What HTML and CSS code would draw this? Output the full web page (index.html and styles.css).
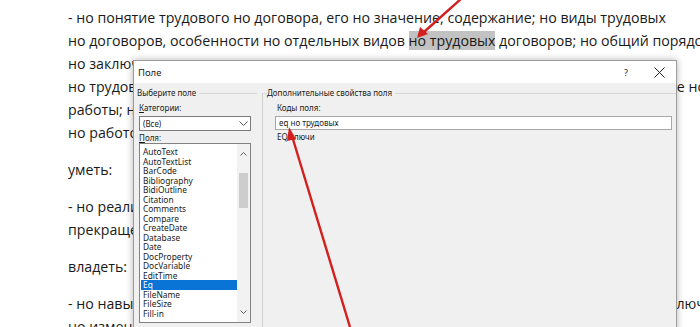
FILE: index.html
```html
<!DOCTYPE html>
<html>
<head lang="ru">
    <meta charset="UTF-8">
    <title>Поле</title>
    <link rel="stylesheet" href="styles.css">
</head>
<body>
    <div class="page">
        <p>- но понятие трудового но договора, его но значение, содержание; но виды трудовых<br>
        но договоров, особенности но отдельных видов <span class="hl">но трудовых</span> договоров; но общий порядок<br>
        но заключения, изменения и прекращения трудового договора; но правовые<br>
        но трудового распорядка; но дисциплина труда и ответственность работниц; основание но<br>
        работы; но гарантии при заключении трудового договора с работником<br>
        но работодателя и порядок оформления документов</p>
        <p>уметь:</p>
        <p>- но реализовывать нормы трудового права в профессиональной<br>
        прекращения трудовых отношений</p>
        <p>владеть:</p>
        <p>- но навыками работы с нормативными документами, но порядком оформления но заключения<br>
        но изменения трудового договора</p>
    </div>

    <div class="dialog">
        <div class="titlebar">
            <span class="title">Поле</span>
            <span class="help">?</span>
            <span class="close">
                <svg width="11" height="11" viewBox="0 0 11 11"><path d="M0.5 0.5L10.5 10.5M10.5 0.5L0.5 10.5" stroke="#222" stroke-width="1"/></svg>
            </span>
        </div>
        <div class="dlg-body">
            <fieldset class="group group-left">
                <legend>Выберите поле</legend>
                <div class="label"><u>К</u>атегории:</div>
                <div class="select">
                    <span>(Все)</span>
                    <span class="drop">
                        <svg width="9" height="5" viewBox="0 0 9 5"><path d="M0.5 0.5L4.5 4.5L8.5 0.5" fill="none" stroke="#555" stroke-width="1"/></svg>
                    </span>
                </div>
                <div class="label"><u>П</u>оля:</div>
                <div class="listbox">
                    <ul>
                        <li>AutoText</li>
                        <li>AutoTextList</li>
                        <li>BarCode</li>
                        <li>Bibliography</li>
                        <li>BidiOutline</li>
                        <li>Citation</li>
                        <li>Comments</li>
                        <li>Compare</li>
                        <li>CreateDate</li>
                        <li>Database</li>
                        <li>Date</li>
                        <li>DocProperty</li>
                        <li>DocVariable</li>
                        <li>EditTime</li>
                        <li class="select-item">Eq</li>
                        <li>FileName</li>
                        <li>FileSize</li>
                        <li>Fill-in</li>
                    </ul>
                    <div class="scrollbar">
                        <svg class="arr-up" width="7" height="4" viewBox="0 0 7 4"><path d="M0.5 3.5L3.5 0.5L6.5 3.5" fill="none" stroke="#606060" stroke-width="1"/></svg>
                        <div class="thumb"></div>
                        <svg class="arr-down" width="7" height="4" viewBox="0 0 7 4"><path d="M0.5 0.5L3.5 3.5L6.5 0.5" fill="none" stroke="#606060" stroke-width="1"/></svg>
                    </div>
                </div>
            </fieldset>
            <fieldset class="group group-right">
                <legend>Дополнительные свойства поля</legend>
                <div class="label">Коды поля:</div>
                <div class="input">eq но трудовых</div>
                <div class="hint">EQ ключи</div>
            </fieldset>
        </div>
    </div>

    <svg class="arrows" width="700" height="327" viewBox="0 0 700 327">
        <line x1="462" y1="-2" x2="424" y2="32" stroke="#d41f1f" stroke-width="2.4"/>
        <polygon points="417,38 420,27 428,34" fill="#d41f1f"/>
        <line x1="350" y1="327" x2="292" y2="136" stroke="#d41f1f" stroke-width="2.4"/>
        <polygon points="289,127 287,141 296,139" fill="#d41f1f"/>
    </svg>
</body>
</html>
```

FILE: styles.css
```css
*{
    margin: 0;
    padding: 0;
}
body{
    width: 700px;
    height: 327px;
    overflow: hidden;
    background: #fff;
    position: relative;
}
li{
    list-style: none;
}
.page{
    padding: 6px 0 0 68px;
    font-family: "Open Sans", "Noto Sans", sans-serif;
    font-size: 14.2px;
    color: #1a1a1a;
}
.page p{
    line-height: 23px;
    margin-bottom: 14px;
    white-space: nowrap;
}
.hl{
    background: #c2c2c2;
}

/* диалог */
.dialog{
    position: absolute;
    left: 133px;
    top: 60px;
    width: 542px;
    height: 290px;
    border: 1px solid #9c9c9c;
    box-shadow: 0 0 7px rgba(0,0,0,0.3);
    background: #f0f0f0;
    font-family: "Noto Sans", "Open Sans", sans-serif;
    font-size: 8px;
    color: #1a1a1a;
    display: flex;
    flex-direction: column;
}
.titlebar{
    height: 22px;
    background: #fff;
    display: flex;
    align-items: center;
    padding-left: 4px;
}
.title{
    font-size: 9.5px;
    flex: 1;
}
.help{
    width: 14px;
    text-align: center;
    font-size: 9px;
    margin-right: 21px;
}
.close{
    width: 11px;
    height: 11px;
    margin-right: 11px;
}
.close svg{
    display: block;
}
.dlg-body{
    flex: 1;
    display: flex;
    padding-top: 4px;
}
.group{
    border: none;
    border-top: 1px solid #d8d8d8;
    min-width: 0;
}
.group legend{
    line-height: 12px;
    padding: 0 3px;
}
.group-left{
    width: 123px;
    margin-right: 5px;
}
.group-right{
    flex: 1;
    border-left: 1px solid #cfcfcf;
    padding-left: 12px;
}
.group-right legend{
    margin-left: -8px;
    padding: 0 3px 0 0;
}
.label{
    height: 12px;
    line-height: 12px;
    margin-top: 3px;
}
.group-left .label{
    margin-left: 5px;
}
.label u{
    text-decoration: underline;
}
.select{
    margin: 2px 0 0 5px;
    width: 112px;
    height: 15px;
    box-sizing: border-box;
    border: 1px solid #7a7a7a;
    background: #fff;
    display: flex;
    align-items: center;
    padding-left: 3px;
}
.select span:first-child{
    flex: 1;
}
.drop{
    width: 14px;
    height: 13px;
    display: flex;
    align-items: center;
    justify-content: center;
}
.group-left .select + .label{
    margin-top: 1px;
    height: 11px;
    line-height: 11px;
}
.listbox{
    margin: 0 0 0 5px;
    width: 112px;
    height: 180px;
    box-sizing: border-box;
    border: 1px solid #828282;
    background: #fff;
    display: flex;
    overflow: hidden;
}
.listbox ul{
    flex: 1;
    padding: 3px 0 0 1px;
    font-size: 8.4px;
}
.listbox li{
    height: 9.5px;
    line-height: 9.5px;
    padding-left: 2px;
}
.listbox .select-item{
    background: #0a74d6;
    color: #fff;
}
.scrollbar{
    width: 13px;
    background: #f2f2f2;
    position: relative;
}
.arr-up, .arr-down{
    position: absolute;
    left: 3px;
}
.arr-up{
    top: 8px;
}
.arr-down{
    top: 166px;
}
.thumb{
    position: absolute;
    left: 2px;
    top: 29px;
    width: 9px;
    height: 35px;
    background: #cdcdcd;
}
.group-right .label{
    margin-top: 3px;
    margin-left: 2px;
}
.input{
    margin-top: 2px;
    height: 14px;
    width: 397px;
    box-sizing: border-box;
    border: 1px solid #a8a8a8;
    background: #fff;
    line-height: 12px;
    padding-left: 3px;
}
.hint{
    margin: 1px 0 0 2px;
    height: 12px;
    line-height: 12px;
}
.arrows{
    position: absolute;
    left: 0;
    top: 0;
}
```
